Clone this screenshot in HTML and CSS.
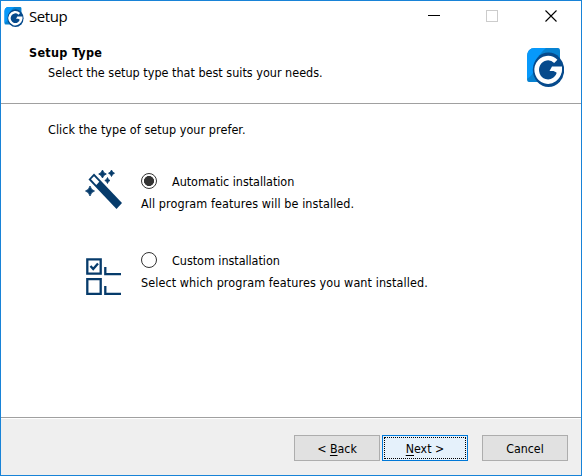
FILE: index.html
```html
<!DOCTYPE html>
<html lang="en">
<head>
<meta charset="utf-8">
<title>Setup</title>
<link rel="stylesheet" href="styles.css">
</head>
<body>
<svg class="defs" width="0" height="0" aria-hidden="true">
  <symbol id="logo" viewBox="0 0 37 39">
    <path d="M8 0H31Q33 0 33 3V34H2Q0 34 0 31V9Q0 0 8 0Z" fill="#0782d1"/>
    <path d="M8 0H19C12 6 9 12 8 18C7 24 5 28 0 31V9Q0 0 8 0Z" fill="#0799fb"/>
    <ellipse cx="21.500" cy="21.800" rx="15.700" ry="17.200" fill="#064a8c"/>
    <path d="M28.800 13.300A11.300 11.800 0 1 0 32.300 22.500" fill="none" stroke="#fff" stroke-width="4.600"/>
    <path d="M25 18.500H35V22.500Q34.800 25 33 28L29.500 24.500L26.500 23H22.500Z" fill="#fff"/>
  </symbol>
</svg>
<main class="window">
  <div class="titlebar">
    <svg class="app-icon"><use href="#logo"/></svg>
    <span class="title">Setup</span>
    <svg class="controls" viewBox="0 0 130 13" shape-rendering="crispEdges">
      <path d="M0 5.500H12" stroke="#000"/>
      <rect x="58.500" y="0.500" width="11" height="11" fill="none" stroke="#ccc"/>
      <path d="M117.500 .5L128.500 11.500M128.500 .5L117.500 11.500" stroke="#000" stroke-width="1.100" shape-rendering="auto"/>
    </svg>
  </div>
  <header class="header">
    <div>
      <h1>Setup Type</h1>
      <p class="subtitle">Select the setup type that best suits your needs.</p>
    </div>
    <svg class="logo"><use href="#logo"/></svg>
  </header>
  <section class="content">
    <p class="prompt">Click the type of setup your prefer.</p>
    <div class="option">
      <svg class="icon" viewBox="0 0 40 40">
        <path d="M3.500 9.500L9 3.500L37 33L31.500 39Z" fill="#063b6b"/>
        <path d="M6 9.300L9 6.200L14.300 11.700L11.300 14.900Z" fill="#fff"/>
        <path d="M17.500 0Q18.200 3 21.300 4Q18.200 5 17.500 8Q16.500 5 13.700 4Q16.500 3 17.500 0ZM26.500 0Q27.200 2.500 29.500 3.200Q27.200 4 26.500 6.500Q25.800 4 23.500 3.200Q25.800 2.500 26.500 0ZM22.500 7.500Q23 9.800 25 10.500Q23 11.200 22.500 13.500Q21.800 11.200 19.800 10.500Q21.800 9.800 22.500 7.500ZM5 16Q6 20 9.500 21Q6 22 5 26Q4 22 .5 21Q4 20 5 16Z" fill="#063b6b" stroke="#063b6b" stroke-width=".8"/>
      </svg>
      <div>
        <label class="choice"><input type="radio" name="type" checked><span>Automatic installation</span></label>
        <p>All program features will be installed.</p>
      </div>
    </div>
    <div class="option">
      <svg class="icon" viewBox="0 0 40 40">
        <g fill="none" stroke="#063b6b" stroke-width="2.300">
          <path d="M2.300 1.300H15.700V15.700H2.300ZM2.300 21.200H15.700V35.800H2.300ZM20.300 9V16.200H36M20.300 28V35.900H36"/>
          <path d="M5.500 8L8.200 11L13 5.500"/>
        </g>
      </svg>
      <div>
        <label class="choice"><input type="radio" name="type"><span>Custom installation</span></label>
        <p>Select which program features you want installed.</p>
      </div>
    </div>
  </section>
  <footer class="footer">
    <button>&lt; <u>B</u>ack</button>
    <button class="primary"><span><u>N</u>ext &gt;</span></button>
    <button class="cancel">Cancel</button>
  </footer>
</main>
</body>
</html>
```
FILE: styles.css
```css
* { box-sizing: border-box; }
body {
  margin: 0;
  font: 12.5px/16px "DejaVu Sans Condensed", "DejaVu Sans", sans-serif;
  font-stretch: condensed;
  color: #000;
}
h1, p { margin: 0; white-space: nowrap; }
.defs { display: block; }
.window {
  height: 476px;
  border: 1px solid #1883d7;
  background: #fff;
  display: flex;
  flex-direction: column;
}
.titlebar { height: 31px; display: flex; align-items: center; padding-left: 3px; }
.app-icon { width: 20px; height: 20px; }
.title { font: 15px/20px "Open Sans", sans-serif; letter-spacing: -.4px; margin-left: 5px; padding-bottom: 1px; }
.controls { width: 130px; height: 13px; margin-left: auto; margin-right: 23px; }
.header {
  height: 72px;
  border-bottom: 1px solid #a0a0a0;
  display: flex;
  justify-content: space-between;
  padding: 12px 17px 0 28px;
}
h1 { margin-top: 1px; font-size: 12.5px; line-height: 16px; font-weight: bold; letter-spacing: .3px; }
.subtitle { margin: 4px 0 0 19px; }
.logo { width: 37px; height: 39px; margin-top: 4px; }
.content { flex: 1; padding-top: 18px; }
.prompt { margin-left: 47px; letter-spacing: .05px; }
.option { display: flex; height: 79px; padding-left: 84px; }
.prompt + .option { margin-top: 31px; }
.icon { width: 40px; height: 40px; margin: 1px 16px 0 0; }
.option + .option .icon { margin-top: 10px; }
.choice { display: flex; align-items: center; height: 24px; gap: 15px; white-space: nowrap; }
.choice span { padding-top: 1px; letter-spacing: -.05px; }
.choice input {
  appearance: none;
  width: 16px;
  height: 16px;
  margin: 0;
  border: 1px solid #333;
  border-radius: 50%;
  background: #fff;
}
.choice input:checked { background: radial-gradient(circle, #333 4.700px, #fff 5.300px); }
.option p { margin-top: 3px; letter-spacing: .08px; }
.footer {
  height: 58px;
  border-top: 1px solid #a0a0a0;
  box-shadow: inset 0 1px #fff;
  background: #efefef;
  display: flex;
  justify-content: flex-end;
  padding: 17px 13px 0 0;
}
button {
  width: 86px;
  height: 26px;
  padding: 2px 1px 0;
  border: 1px solid #adadad;
  background: #e1e1e1;
  font: inherit;
  font-size: 12.3px;
  color: #000;
}
u { text-underline-offset: 2px; text-decoration-thickness: 1px; text-decoration-skip-ink: none; }
.primary { margin-left: 2px; padding: 1px; border-color: #0078d7; background: #e5f1fb; }
.primary span { display: block; height: 22px; line-height: 22px; border: 1px dotted #000; }
.cancel { margin-left: 14px; }
```
